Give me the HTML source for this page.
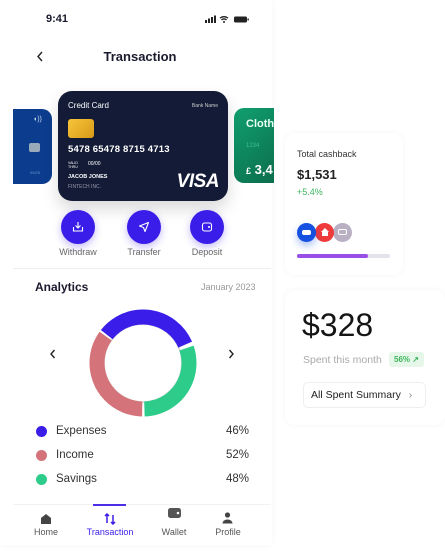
<!DOCTYPE html>
<html><head><meta charset="utf-8"><style>
*{margin:0;padding:0;box-sizing:border-box}
body{width:445px;height:560px;background:#fff;font-family:"Liberation Sans",sans-serif;position:relative;overflow:hidden;color:#1a1a2e}
.a{position:absolute}
.btn{width:34px;height:34px;border-radius:50%;background:#3a1de8;box-shadow:0 3px 8px rgba(58,29,232,.3)}
.lbl{font-size:9px;color:#666;width:60px;text-align:center}
.nav{font-size:9px;color:#555;width:60px;text-align:center}
</style></head><body>
<div class="a" style="left:0;top:0;width:272px;height:545px;background:#fff;box-shadow:0 0 8px rgba(0,0,0,.04)"></div>
<div class="a" style="left:46px;top:13px;font-size:11px;font-weight:bold">9:41</div>
<svg class="a" style="left:205px;top:15px" width="45" height="9" viewBox="0 0 45 9"><rect x="0" y="5" width="2" height="3" fill="#222"/><rect x="3" y="3.5" width="2" height="4.5" fill="#222"/><rect x="6" y="2" width="2" height="6" fill="#222"/><rect x="9" y="0.5" width="2" height="7.5" fill="#222"/><path d="M15 3.2a6 6 0 0 1 8 0M16.5 5a3.5 3.5 0 0 1 5 0" stroke="#222" stroke-width="1.3" fill="none"/><circle cx="19" cy="7" r="1" fill="#222"/><rect x="29" y="1.5" width="13" height="6" rx="1.5" fill="#222"/><rect x="42.5" y="3.5" width="1.3" height="2" fill="#222"/></svg>
<svg class="a" style="left:36px;top:51px" width="8" height="11"><path d="M6 1L2 5.5L6 10" stroke="#222" stroke-width="1.4" fill="none"/></svg>
<div class="a" style="left:0;width:280px;top:49px;text-align:center;font-size:13px;font-weight:bold">Transaction</div>
<!-- side cards -->
<div class="a" style="left:13px;top:109px;width:39px;height:75px;background:#0c3c8e;border-radius:0 10px 10px 0"></div>
<div class="a" style="left:33px;top:116px;font-size:7px;color:#cde">◖))</div>
<div class="a" style="left:29px;top:143px;width:11px;height:9px;background:#9ab;border-radius:2px"></div>
<div class="a" style="left:30px;top:170px;font-size:4px;color:#69c">09/25</div>
<div class="a" style="left:234px;top:108px;width:40px;height:75px;background:linear-gradient(135deg,#11a070,#0b6e4c);border-radius:10px 0 0 10px"></div>
<div class="a" style="left:246px;top:118px;font-size:11px;font-weight:bold;color:#e8fff4">Cloth</div>
<div class="a" style="left:246px;top:143px;font-size:6px;color:#3fbf8f">1234</div>
<div class="a" style="left:246px;top:162px;font-size:13px;font-weight:bold;color:#fff"><span style="font-size:9px">£</span> 3,4</div>
<!-- main card -->
<div class="a" style="left:58px;top:91px;width:170px;height:110px;background:#131b36;border-radius:14px;box-shadow:0 8px 16px rgba(0,0,0,.15);color:#fff">
<div class="a" style="left:10px;top:10px;font-size:8px">Credit Card</div>
<div class="a" style="right:10px;top:12px;font-size:5px;color:#ccc">Bank Name</div>
<div class="a" style="left:10px;top:28px;width:26px;height:19px;border-radius:3px;background:linear-gradient(135deg,#f5c53a,#d99a18)"></div>
<div class="a" style="left:10px;top:53px;font-size:9.5px;font-weight:bold;letter-spacing:.2px">5478 65478 8715 4713</div>
<div class="a" style="left:10px;top:70px;font-size:3.5px;line-height:4px">VALID<br>THRU</div>
<div class="a" style="left:30px;top:70px;font-size:5px">00/00</div>
<div class="a" style="left:10px;top:83px;font-size:5.5px;font-weight:bold">JACOB JONES</div>
<div class="a" style="left:10px;top:93px;font-size:5px;color:#99a">FINTECH INC.</div>
<div class="a" style="right:9px;top:80px;font-size:19px;font-weight:bold;font-style:italic;letter-spacing:-.5px">VISA</div>
</div>
<!-- buttons -->
<div class="a btn" style="left:61px;top:210px"></div>
<div class="a btn" style="left:127px;top:210px"></div>
<div class="a btn" style="left:190px;top:210px"></div>
<svg class="a" style="left:72px;top:221px" width="12" height="12"><path d="M6 1v6M3.5 4.5L6 7l2.5-2.5M1.5 6v4h9V6" stroke="#fff" stroke-width="1.1" fill="none"/></svg>
<svg class="a" style="left:138px;top:221px" width="12" height="12"><path d="M10.5 1.5L1.5 5l4 1.5 1.5 4z" stroke="#fff" stroke-width="1.1" fill="none" stroke-linejoin="round"/></svg>
<svg class="a" style="left:201px;top:221px" width="12" height="12"><rect x="1.5" y="2" width="9" height="8" rx="2" stroke="#fff" stroke-width="1.1" fill="none"/><circle cx="8" cy="6" r="1" fill="#fff"/></svg>
<div class="a lbl" style="left:48px;top:247px">Withdraw</div>
<div class="a lbl" style="left:114px;top:247px">Transfer</div>
<div class="a lbl" style="left:177px;top:247px">Deposit</div>
<div class="a" style="left:13px;top:268px;width:258px;height:1px;background:#eee"></div>
<!-- analytics -->
<div class="a" style="left:35px;top:280px;font-size:12px;font-weight:bold">Analytics</div>
<div class="a" style="left:201px;top:282px;font-size:9px;color:#999">January 2023</div>
<svg class="a" style="left:48px;top:348px" width="9" height="12"><path d="M6.5 2L3 6l3.5 4" stroke="#222" stroke-width="1.4" fill="none"/></svg>
<svg class="a" style="left:227px;top:348px" width="9" height="12"><path d="M2.5 2L6 6l-3.5 4" stroke="#222" stroke-width="1.4" fill="none"/></svg>
<svg class="a" style="left:88px;top:308px" width="110" height="110" viewBox="0 0 110 110">
<circle cx="55" cy="55" r="39" fill="none" stroke="#ddd" stroke-width="2"/>
<g transform="rotate(-90 55 55)" fill="none" stroke-width="15">
<circle cx="55" cy="55" r="46" stroke="#3a1de8" stroke-dasharray="95 400" transform="rotate(-52 55 55)"/>
<circle cx="55" cy="55" r="46" stroke="#2ecc8a" stroke-dasharray="86 400" transform="rotate(71 55 55)"/>
<circle cx="55" cy="55" r="46" stroke="#d4737a" stroke-dasharray="100 400" transform="rotate(181 55 55)"/>
</g></svg>
<div class="a" style="left:36px;top:426px;width:11px;height:11px;border-radius:50%;background:#3a1de8"></div>
<div class="a" style="left:36px;top:450px;width:11px;height:11px;border-radius:50%;background:#d4737a"></div>
<div class="a" style="left:36px;top:474px;width:11px;height:11px;border-radius:50%;background:#2ecc8a"></div>
<div class="a" style="left:56px;top:425px;font-size:11.5px;color:#333">Expenses</div>
<div class="a" style="left:56px;top:449px;font-size:11.5px;color:#333">Income</div>
<div class="a" style="left:56px;top:473px;font-size:11.5px;color:#333">Savings</div>
<div class="a" style="left:226px;top:425px;font-size:11.5px;color:#333">46%</div>
<div class="a" style="left:226px;top:449px;font-size:11.5px;color:#333">52%</div>
<div class="a" style="left:226px;top:473px;font-size:11.5px;color:#333">48%</div>
<!-- nav -->
<div class="a" style="left:13px;top:504px;width:258px;height:1px;background:#f2f2f2"></div>
<div class="a" style="left:93px;top:504px;width:33px;height:2px;background:#4a2ee8"></div>
<svg class="a" style="left:40px;top:513px" width="12" height="11"><path d="M1 5L6 1l5 4v6H1z" fill="#444"/></svg>
<svg class="a" style="left:104px;top:513px" width="12" height="12"><path d="M3 1v9M1 3l2-2 2 2M9 11V2M7 9l2 2 2-2" stroke="#3a1de8" stroke-width="1.5" fill="none"/></svg>
<svg class="a" style="left:168px;top:508px" width="13" height="11"><rect x="0" y="0" width="13" height="10" rx="2.5" fill="#555"/><circle cx="10" cy="5" r="1.3" fill="#fff"/></svg>
<svg class="a" style="left:222px;top:512px" width="11" height="12"><circle cx="5.5" cy="3" r="2.6" fill="#444"/><path d="M0.5 11.5a5 4 0 0 1 10 0z" fill="#444"/></svg>
<div class="a nav" style="left:16px;top:527px">Home</div>
<div class="a nav" style="left:80px;top:527px;color:#3a1de8">Transaction</div>
<div class="a nav" style="left:144px;top:527px">Wallet</div>
<div class="a nav" style="left:198px;top:527px">Profile</div>
<!-- right cards -->
<div class="a" style="left:285px;top:133px;width:118px;height:142px;border-radius:10px;background:#fff;box-shadow:0 0 6px rgba(0,0,0,.05)"></div>
<div class="a" style="left:297px;top:149px;font-size:9px;color:#333">Total cashback</div>
<div class="a" style="left:297px;top:167px;font-size:13px;font-weight:bold;color:#222">$1,531</div>
<div class="a" style="left:297px;top:187px;font-size:9px;color:#3cb55c">+5.4%</div>
<div class="a" style="left:333px;top:223px;width:19px;height:19px;border-radius:50%;background:#b9b0c4"></div>
<div class="a" style="left:315px;top:223px;width:19px;height:19px;border-radius:50%;background:#ef3b3b"></div>
<div class="a" style="left:297px;top:223px;width:19px;height:19px;border-radius:50%;background:#1550e0;box-shadow:0 4px 8px rgba(21,80,224,.35)"></div>
<div class="a" style="left:302px;top:230px;width:9px;height:5px;border-radius:2px;background:#fff"></div>
<div class="a" style="left:321px;top:228px;width:0;height:0;border-left:4px solid transparent;border-right:4px solid transparent;border-bottom:4px solid #fff"></div>
<div class="a" style="left:322px;top:232px;width:6px;height:4px;background:#fff"></div>
<div class="a" style="left:338px;top:229px;width:9px;height:6px;border-radius:2px;border:1.3px solid #fff"></div>
<div class="a" style="left:297px;top:254px;width:93px;height:4px;border-radius:2px;background:#e4e2ea"></div>
<div class="a" style="left:297px;top:254px;width:71px;height:4px;border-radius:2px;background:#9a4ee8"></div>
<div class="a" style="left:285px;top:290px;width:160px;height:135px;border-radius:10px;background:#fff;box-shadow:0 0 6px rgba(0,0,0,.05)"></div>
<div class="a" style="left:302px;top:307px;font-size:32px;color:#151515">$328</div>
<div class="a" style="left:303px;top:354px;font-size:10.5px;color:#aaa">Spent this month</div>
<div class="a" style="left:389px;top:352px;width:35px;height:15px;border-radius:3px;background:#e6f7ea;color:#3cb55c;font-size:8px;font-weight:bold;text-align:center;line-height:15px">56% ↗</div>
<div class="a" style="left:303px;top:382px;width:123px;height:26px;border-radius:5px;border:1px solid #eee;background:#fff;font-size:10.5px;color:#222;line-height:24px;padding-left:7px">All Spent Summary <span style="color:#888;margin-left:5px">›</span></div>
</body></html>
